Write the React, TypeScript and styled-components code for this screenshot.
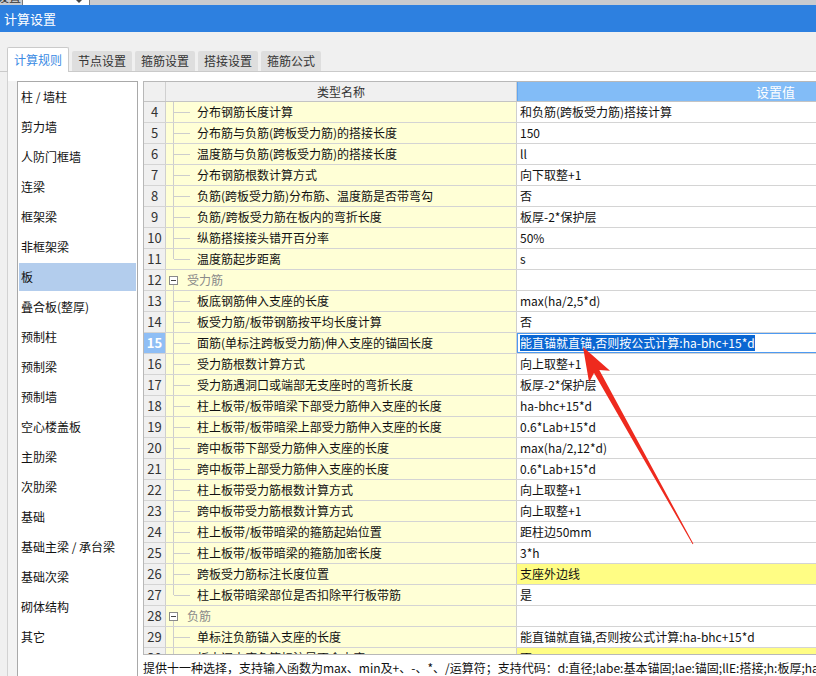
import React from 'react';
import styled, { createGlobalStyle, css } from 'styled-components';

const GlobalStyle = createGlobalStyle`
  html, body {
    margin: 0;
    padding: 0;
  }
  body {
    background: #f0f0f0;
    font-family: "Noto Sans CJK SC", "Noto Sans", sans-serif;
    font-size: 12px;
    color: #111;
  }
`;

interface RowData {
  n: number;
  name: string;
  value?: string;
  group?: boolean;
  last?: boolean;
  selected?: boolean;
  marked?: boolean;
}

const sideItems = [
  '柱 / 墙柱',
  '剪力墙',
  '人防门框墙',
  '连梁',
  '框架梁',
  '非框架梁',
  '板',
  '叠合板(整厚)',
  '预制柱',
  '预制梁',
  '预制墙',
  '空心楼盖板',
  '主肋梁',
  '次肋梁',
  '基础',
  '基础主梁 / 承台梁',
  '基础次梁',
  '砌体结构',
  '其它',
];

const tabs = ['计算规则', '节点设置', '箍筋设置', '搭接设置', '箍筋公式'];

const rows: RowData[] = [
  { n: 4, name: '分布钢筋长度计算', value: '和负筋(跨板受力筋)搭接计算' },
  { n: 5, name: '分布筋与负筋(跨板受力筋)的搭接长度', value: '150' },
  { n: 6, name: '温度筋与负筋(跨板受力筋)的搭接长度', value: 'll' },
  { n: 7, name: '分布钢筋根数计算方式', value: '向下取整+1' },
  { n: 8, name: '负筋(跨板受力筋)分布筋、温度筋是否带弯勾', value: '否' },
  { n: 9, name: '负筋/跨板受力筋在板内的弯折长度', value: '板厚-2*保护层' },
  { n: 10, name: '纵筋搭接接头错开百分率', value: '50%' },
  { n: 11, name: '温度筋起步距离', value: 's', last: true },
  { n: 12, name: '受力筋', group: true },
  { n: 13, name: '板底钢筋伸入支座的长度', value: 'max(ha/2,5*d)' },
  { n: 14, name: '板受力筋/板带钢筋按平均长度计算', value: '否' },
  {
    n: 15,
    name: '面筋(单标注跨板受力筋)伸入支座的锚固长度',
    value: '能直锚就直锚,否则按公式计算:ha-bhc+15*d',
    selected: true,
  },
  { n: 16, name: '受力筋根数计算方式', value: '向上取整+1' },
  { n: 17, name: '受力筋遇洞口或端部无支座时的弯折长度', value: '板厚-2*保护层' },
  { n: 18, name: '柱上板带/板带暗梁下部受力筋伸入支座的长度', value: 'ha-bhc+15*d' },
  { n: 19, name: '柱上板带/板带暗梁上部受力筋伸入支座的长度', value: '0.6*Lab+15*d' },
  { n: 20, name: '跨中板带下部受力筋伸入支座的长度', value: 'max(ha/2,12*d)' },
  { n: 21, name: '跨中板带上部受力筋伸入支座的长度', value: '0.6*Lab+15*d' },
  { n: 22, name: '柱上板带受力筋根数计算方式', value: '向上取整+1' },
  { n: 23, name: '跨中板带受力筋根数计算方式', value: '向上取整+1' },
  { n: 24, name: '柱上板带/板带暗梁的箍筋起始位置', value: '距柱边50mm' },
  { n: 25, name: '柱上板带/板带暗梁的箍筋加密长度', value: '3*h' },
  { n: 26, name: '跨板受力筋标注长度位置', value: '支座外边线', marked: true },
  { n: 27, name: '柱上板带暗梁部位是否扣除平行板带筋', value: '是', last: true },
  { n: 28, name: '负筋', group: true },
  {
    n: 29,
    name: '单标注负筋锚入支座的长度',
    value: '能直锚就直锚,否则按公式计算:ha-bhc+15*d',
  },
  { n: 30, name: '板中间支座负筋标注是否含支座', value: '否', marked: true },
];

const Page = styled.div`
  position: relative;
  width: 816px;
  height: 676px;
  overflow: hidden;
  display: flex;
  flex-direction: column;
`;

const TopStrip = styled.div`
  height: 5px;
  flex: 0 0 5px;
  background: #c9cbcf;
  display: flex;
  overflow: hidden;
`;

const StripLabel = styled.span`
  width: 22px;
  flex: 0 0 22px;
  font-size: 12px;
  line-height: 14px;
  margin-top: -10px;
  color: #333;
  white-space: nowrap;
  overflow: hidden;
  text-indent: -3px;
`;

const ComboBox = styled.div`
  width: 66px;
  background: #fff;
  border-left: 1px solid #7a7a7a;
  border-right: 1px solid #7a7a7a;
  position: relative;

  &::after {
    content: '';
    position: absolute;
    right: 7px;
    top: 0;
    border-left: 3px solid transparent;
    border-right: 3px solid transparent;
    border-top: 3px solid #444;
  }
`;

const TitleBar = styled.div`
  flex: 0 0 27px;
  background: #2d80e0;
  color: #fff;
  font-size: 13px;
  line-height: 27px;
  padding-left: 4px;
`;

const TabBar = styled.div`
  margin-top: 15px;
  height: 24px;
  flex: 0 0 24px;
  display: flex;
  align-items: flex-end;
  padding-left: 7px;
  border-bottom: 1px solid #cacaca;
`;

const Tab = styled.div<{ $active?: boolean }>`
  box-sizing: border-box;
  font-size: 12px;
  text-align: center;
  border-radius: 2px 2px 0 0;
  ${(p) =>
    p.$active
      ? css`
          width: 62px;
          height: 25px;
          margin-bottom: -1px;
          line-height: 24px;
          background: #fff;
          color: #3b8be4;
          border: 1px solid #cacaca;
          border-bottom: none;
        `
      : css`
          width: 60px;
          height: 20px;
          line-height: 20px;
          margin-left: 3px;
          background: #dedede;
          color: #333;
        `}
`;

const Panel = styled.div`
  flex: 1;
  margin-left: 7px;
  background: #fff;
  border-left: 1px solid #d2d2d2;
  padding-top: 9px;
  display: flex;
  min-height: 0;
`;

const Gutter = styled.div`
  width: 9px;
  flex: 0 0 9px;
  background: #f3f3f3;
`;

const Sidebar = styled.div`
  box-sizing: border-box;
  width: 121px;
  flex: 0 0 121px;
  border: 1px solid #a9a9a9;
  border-bottom: none;
  background: #fff;
  display: flex;
  flex-direction: column;
`;

const SideItem = styled.div<{ $active?: boolean }>`
  height: 28px;
  margin: 1px;
  padding-left: 2px;
  line-height: 28px;
  font-size: 12px;
  color: #111;
  white-space: nowrap;
  background: ${(p) => (p.$active ? '#b3cded' : 'transparent')};
`;

const Main = styled.div`
  flex: 1;
  margin-left: 5px;
  display: flex;
  flex-direction: column;
  min-width: 0;
`;

const Grid = styled.div`
  box-sizing: border-box;
  height: 574px;
  flex: 0 0 574px;
  overflow: hidden;
  border-top: 1px solid #b8b8b8;
  border-left: 1px solid #b8b8b8;
  border-bottom: 1px solid #b8b8b8;
`;

const Columns = css`
  display: grid;
  grid-template-columns: 22px 351px 1fr;
  box-sizing: border-box;
`;

const HeaderRow = styled.div`
  ${Columns};
  height: 20px;
  border-bottom: 1px solid #c4c4c4;
`;

const HeadCell = styled.div<{ $value?: boolean }>`
  line-height: 19px;
  font-size: 12px;
  white-space: nowrap;
  ${(p) =>
    p.$value
      ? css`
          background: #82bcf7;
          border-left: 1px solid #62a6f0;
          color: #fff;
          text-align: right;
          padding-right: 21px;
          font-size: 13px;
        `
      : css`
          background: #f0f0f0;
          border-right: 1px solid #d0d0d0;
          color: #333;
          text-align: center;
        `}
`;

const Row = styled.div`
  ${Columns};
  height: 21px;
  border-bottom: 1px solid #d4d4d4;
`;

const NumCell = styled.div<{ $active?: boolean }>`
  text-align: center;
  font-size: 13px;
  line-height: 20px;
  border-right: 1px solid #cfcfcf;
  background: ${(p) => (p.$active ? '#8fbef5' : '#f0f0f0')};
  color: ${(p) => (p.$active ? '#fff' : '#333')};
  font-weight: ${(p) => (p.$active ? 700 : 400)};
`;

const NameCell = styled.div`
  display: flex;
  align-items: center;
  background: #ffffd6;
  border-right: 1px solid #cfcfcf;
  line-height: 20px;
  white-space: nowrap;
  overflow: hidden;
`;

const ValueCell = styled.div<{ $selected?: boolean; $marked?: boolean }>`
  padding-left: 3px;
  line-height: 20px;
  white-space: nowrap;
  overflow: hidden;
  background: ${(p) => (p.$marked ? '#fffd84' : '#fff')};
  ${(p) =>
    p.$selected &&
    css`
      box-shadow: inset 0 1px 0 #4d9af2, inset 0 -1px 0 #4d9af2, inset 1px 0 0 #4d9af2;
    `}
`;

const SelectedText = styled.span`
  display: inline-block;
  background: #0a66d2;
  color: #fff;
  line-height: 16px;
`;

const Guide = styled.span<{ $last?: boolean }>`
  position: relative;
  flex: 0 0 31px;
  align-self: stretch;

  &::before {
    content: '';
    position: absolute;
    left: 7px;
    top: 0;
    bottom: ${(p) => (p.$last ? '50%' : '-1px')};
    border-left: 1px solid #cdcdcd;
  }

  &::after {
    content: '';
    position: absolute;
    left: 8px;
    width: 16px;
    top: 50%;
    border-top: 1px solid #cdcdcd;
  }
`;

const GroupGuide = styled.span`
  position: relative;
  flex: 0 0 21px;
  align-self: stretch;
  display: flex;
  align-items: center;

  &::after {
    content: '';
    position: absolute;
    left: 7px;
    top: 15px;
    bottom: -1px;
    border-left: 1px solid #cdcdcd;
  }
`;

const ToggleBox = styled.span`
  box-sizing: border-box;
  width: 9px;
  height: 9px;
  margin-left: 3px;
  border: 1px solid #8a8a8a;
  background: #fff;
  display: flex;
  align-items: center;
  justify-content: center;

  &::before {
    content: '';
    width: 5px;
    border-top: 1px solid #444;
  }
`;

const GroupLabel = styled.span`
  color: #8a8a8a;
`;

const HelpText = styled.div`
  padding-top: 5px;
  line-height: 16px;
  font-size: 12px;
  color: #111;
  white-space: nowrap;
  overflow: hidden;
`;

const ArrowLayer = styled.svg`
  position: absolute;
  left: 0;
  top: 0;
  pointer-events: none;
`;

const TableRow = ({ row }: { row: RowData }) => (
  <Row>
    <NumCell $active={row.selected}>{row.n}</NumCell>
    <NameCell>
      {row.group ? (
        <>
          <GroupGuide>
            <ToggleBox />
          </GroupGuide>
          <GroupLabel>{row.name}</GroupLabel>
        </>
      ) : (
        <>
          <Guide $last={row.last} />
          <span>{row.name}</span>
        </>
      )}
    </NameCell>
    <ValueCell $selected={row.selected} $marked={row.marked}>
      {row.selected ? <SelectedText>{row.value}</SelectedText> : row.value}
    </ValueCell>
  </Row>
);

const App = () => (
  <Page>
    <GlobalStyle />
    <TopStrip>
      <StripLabel>设置</StripLabel>
      <ComboBox />
    </TopStrip>
    <TitleBar>计算设置</TitleBar>
    <TabBar>
      {tabs.map((t, i) => (
        <Tab key={t} $active={i === 0}>
          {t}
        </Tab>
      ))}
    </TabBar>
    <Panel>
      <Gutter />
      <Sidebar>
        {sideItems.map((s) => (
          <SideItem key={s} $active={s === '板'}>
            {s}
          </SideItem>
        ))}
      </Sidebar>
      <Main>
        <Grid>
          <HeaderRow>
            <HeadCell />
            <HeadCell>类型名称</HeadCell>
            <HeadCell $value>设置值</HeadCell>
          </HeaderRow>
          {rows.map((r) => (
            <TableRow key={r.n} row={r} />
          ))}
        </Grid>
        <HelpText>
          提供十一种选择，支持输入函数为max、min及+、-、*、/运算符；支持代码：d:直径;labe:基本锚固;lae:锚固;llE:搭接;h:板厚;ha:支座宽度
        </HelpText>
      </Main>
    </Panel>
    <ArrowLayer width="816" height="676" viewBox="0 0 816 676">
      <polygon
        points="583,347 610,370.8 599.3,370 693.4,543.8 692.6,544.2 594,372.9 589.1,382.5"
        fill="#ee2a1e"
      />
    </ArrowLayer>
  </Page>
);

export default App;
